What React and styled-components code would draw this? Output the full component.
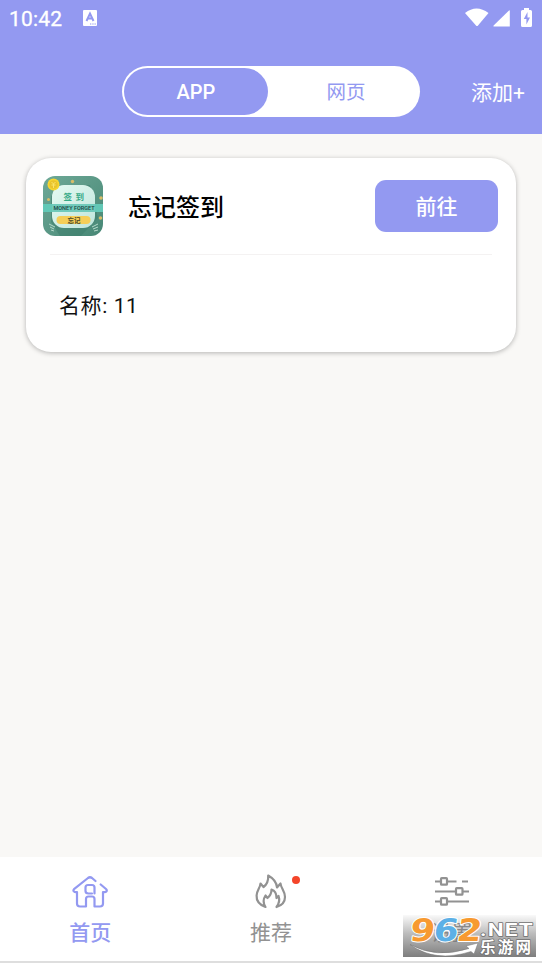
import React, { useState } from 'react';
import styled, { createGlobalStyle } from 'styled-components'

const purple = '#9399f1'

const GlobalStyle = createGlobalStyle`
    * {
        box-sizing: border-box;
    }

    body {
        margin: 0;
        background: #f9f8f6;
        font-family: Roboto, "Noto Sans CJK SC", sans-serif;
    }

    button {
        border: 0;
        padding: 0;
        background: none;
        font-family: inherit;
    }
`

const Screen = styled.div`
    position: relative;
    display: flex;
    flex-direction: column;
    width: 542px;
    height: 963px;
    overflow: hidden;
`

const Header = styled.header`
    flex: 0 0 134px;
    background: ${purple};
    color: #fff;
`

const StatusBar = styled.div`
    display: flex;
    align-items: center;
    height: 36px;
    padding: 0 8px 0 9px;
    font-size: 21px;
    line-height: 36px;

    time {
        width: 74px;
        padding-top: 2px;
        letter-spacing: 0.2px;
        -webkit-text-stroke: 0.3px #fff;
    }

    svg:last-child {
        margin-left: auto;
    }
`

const TopBar = styled.div`
    display: grid;
    grid-template-columns: 122px 298px 1fr;
    align-items: center;
    padding-top: 30px;
`

const Switcher = styled.div`
    grid-column: 2;
    display: flex;
    height: 51px;
    padding: 2px;
    border-radius: 26px;
    background: #fff;
`

const SwitchItem = styled.button`
    flex: 0 0 ${props => props.$width}px;
    height: 47px;
    padding-top: 2px;
    border-radius: 24px;
    background: ${props => props.$active ? purple : '#fff'};
    color: ${props => props.$active ? '#fff' : purple};
    font-size: ${props => props.$size}px;
    font-weight: ${props => props.$active ? 500 : 400};
    line-height: 45px;

    &:last-child {
        padding-left: 6px;
    }
`

const AddButton = styled.button`
    justify-self: end;
    padding: 2px 17px 0 0;
    color: #fff;
    font-size: 21px;
    line-height: 30px;
`

const Content = styled.main`
    flex: 1;
    padding: 24px 26px;
`

const Card = styled.section`
    height: 193.5px;
    border-radius: 25px;
    background: #fff;
    box-shadow: 0 1px 5px rgba(0, 0, 0, 0.28);
`

const CardHead = styled.div`
    display: flex;
    align-items: center;
    height: 97px;
    margin: 0 24px;
    border-bottom: 1px solid #f4f2f2;

    svg {
        flex: none;
        margin-left: -7px;
    }
`

const Title = styled.h1`
    flex: 1;
    margin: 4px 0 0 25px;
    color: #000;
    font-size: 24px;
    font-weight: 500;
    line-height: 34px;
`

const GoButton = styled.button`
    width: 123px;
    height: 52px;
    margin-right: -6px;
    padding-top: 2px;
    border-radius: 11px;
    background: ${purple};
    color: #fff;
    font-size: 21px;
    font-weight: 500;
    line-height: 50px;
`

const Detail = styled.p`
    margin: 0;
    padding: 34px 33px 0;
    color: #111;
    font-size: 21px;
    line-height: 34px;
    letter-spacing: 0.6px;
`

const TabBar = styled.nav`
    flex: 0 0 106px;
    display: grid;
    grid-template-columns: repeat(3, 1fr);
    border-bottom: 2px solid #dedede;
    background: #fff;
`

const TabItem = styled.button`
    display: flex;
    flex-direction: column;
    align-items: center;
    padding-top: 16px;
    color: ${props => props.$active ? purple : '#929292'};
    font-size: 21px;
    font-weight: ${props => props.$active ? 500 : 400};
    line-height: 30px;

    span {
        margin-top: 9px;
    }
`

const IconBox = styled.div`
    position: relative;
    width: 36px;
    height: 36px;

    svg {
        display: block;
    }
`

const Dot = styled.i`
    position: absolute;
    top: 3px;
    right: -11px;
    width: 8px;
    height: 8px;
    border-radius: 50%;
    background: #f4452a;
`

const Stamp = styled.svg`
    position: absolute;
    left: 403px;
    top: 915px;
    overflow: visible;
`

const InputIcon = () => (
    <svg width="14" height="16" viewBox="0 0 14 16">
        <rect width="14" height="16" rx="1" fill="#fff" />
        <path d="M3.5 11 7 3.5 10.5 11M5 8.5h4" fill="none" stroke={purple} strokeWidth="2" />
        <path d="M7 14h1.3M9.3 14h1.3M11.5 14h1.3" stroke={purple} />
    </svg>
)

const StatusIcons = () => (
    <svg width="69" height="22" viewBox="0 0 69 22" fill="#fff">
        <path d="M0 6Q11.5-3 23.5 6L13 18.5Q12 19.5 11 18.5Z" />
        <path d="M44 3.5Q44.800 2.800 44.800 4v15.500H29q-1.300 0-.4-.9Z" />
        <path d="M59 3V1h5v2h1.500q1.500 0 1.500 1.500v14q0 1.500-1.500 1.500h-8q-1.500 0-1.500-1.500v-14Q56 3 57.500 3Z" />
        <path d="M62.500 5 58.800 12h2.600v5.500l3.600-7h-2.500Z" fill={purple} />
    </svg>
)

const AppIcon = () => (
    <svg width="60" height="60" viewBox="0 0 60 60">
        <defs>
            <linearGradient id="iconBack" x2="1" y2="1">
                <stop stopColor="#6ea997" />
                <stop offset="1" stopColor="#478775" />
            </linearGradient>
            <linearGradient id="iconPlate" x2="1" y2="1">
                <stop stopColor="#e5faf2" />
                <stop offset="1" stopColor="#bfe5dc" />
            </linearGradient>
            <clipPath id="iconShape">
                <rect width="60" height="60" rx="12" />
            </clipPath>
        </defs>
        <g clipPath="url(#iconShape)">
            <rect width="60" height="60" fill="url(#iconBack)" />
            <path d="M8 20 22 9h25L55 42 38 60H17L8 46Z" fill="#397a68" opacity=".45" />
            <rect y="28" width="60" height="8" fill="#62c8b6" />
            <rect x="9" y="9" width="43" height="43" rx="12" fill="url(#iconPlate)" />
            <rect x="9" y="28" width="43" height="8" fill="#70cabb" />
            <text x="20.5" y="23.5" fontSize="8.5" fontWeight="700" fill="#35a986" letterSpacing="3.5">签到</text>
            <text x="10.5" y="34.3" textLength="41" lengthAdjust="spacingAndGlyphs" fontSize="6" fontWeight="500" fill="#17453f">MONEY FORGET</text>
            <rect x="13.5" y="40" width="34" height="8" rx="4" fill="#f5ce58" />
            <text x="24.5" y="46.5" fontSize="6.5" fontWeight="700" fill="#4b4928">忘记</text>
            <circle cx="10.5" cy="8.5" r="6" fill="#f6d62f" />
            <circle cx="10.5" cy="8.5" r="4.3" fill="#eac42c" />
            <path d="m8.500 6 2 2 2-2M10.500 8v4M8.500 9h4" fill="none" stroke="#f9e469" />
            <g fill="#d7bd68">
                <circle cx="29.5" cy="5.5" r="1.7" />
                <circle cx="5.5" cy="23.5" r="1.5" />
                <circle cx="58" cy="22" r="1.8" />
                <circle cx="57.5" cy="42" r="1.8" />
            </g>
            <path d="m6 48 6 3M7 51l4 2M8 54l3 1M55 48l-6 3M55 51l-5 2M55 54l-4 1" stroke="#b5d9cb" />
        </g>
    </svg>
)

const HomeIcon = () => (
    <svg width="36" height="36" viewBox="0 0 36 36" fill="none" stroke={purple} strokeWidth="2.2" strokeLinecap="round" strokeLinejoin="round">
        <path d="M23.5 8 20 5Q18 3.500 16 5L2 16.200Q.8 17.500 2 18.500q1 1 3 .5v11.500q0 3 3 3h6V26q0-2.500 2.500-2.500H20q2.500 0 2.500 2.500v7.500H28q3 0 3-3V19q2.500.5 3.300-.5 1-1.200-.3-2.500L28.700 11.500" />
        <path d="M20 20.500h-3.500q-3 0-3-2.500v-3.500q0-2.500 2.500-2.500h4q2.500 0 2.500 2.500V20.500" />
    </svg>
)

const FireIcon = () => (
    <svg width="36" height="36" viewBox="0 0 36 36" fill="none" stroke="#929292" strokeWidth="2.2" strokeLinejoin="round" strokeLinecap="round">
        <path d="M12.500 34C6 31.500 3.300 27 3.600 22.500 4 17 7 15.500 7.500 10.500L10.500 14C14.500 11 15.500 7.500 15.200 2.500 21.500 6 23.700 10 24 14.500L27.500 10.500C28 15.500 32 18 32 24 32 29 28.500 32.500 23.500 34 26.500 30 27 27 25.500 23L23.500 25C23.500 20.500 22 17.500 18.500 16.500 18.500 20 17.500 22.500 14.500 25L12.500 22.500C9.500 27 9.800 30 12.500 34Z" />
    </svg>
)

const SettingsIcon = () => (
    <svg width="36" height="36" viewBox="0 0 36 36" fill="none" stroke="#929292" strokeWidth="2.2">
        <path d="M1 8.500h6M13 8.500h9.500M28 8.500h6M1 18.500h20.500M28.500 18.500H35M1 28.500h6M13 28.500h22" />
        <rect x="7" y="5.2" width="6" height="6.5" rx=".8" />
        <rect x="22" y="15.2" width="6.5" height="6.5" rx=".8" />
        <rect x="7" y="25.2" width="6" height="6.5" rx=".8" />
    </svg>
)

const SiteStamp = () => (
    <Stamp width="133" height="42" viewBox="0 0 133 42">
        <defs>
            <linearGradient id="stampBack" x2="0" y2="1">
                <stop stopColor="#777" stopOpacity=".04" />
                <stop offset=".45" stopColor="#777" stopOpacity=".5" />
                <stop offset="1" stopColor="#777" stopOpacity=".95" />
            </linearGradient>
        </defs>
        <rect width="133" height="42" fill="url(#stampBack)" />
        <path d="M7 29.500Q33 44 66 33.500l-3-2.500 12-3-4 11-3-2.500Q32 48 7 29.500Z" fill="#fff" stroke="#777" strokeWidth=".5" />
        <g transform="translate(4.5 0) skewX(-8)" fontFamily="DejaVu Sans, sans-serif" fontWeight="700" fontSize="31" stroke="#fff" strokeWidth="2" paintOrder="stroke" strokeLinejoin="round">
            <text x="5" y="26" textLength="25" lengthAdjust="spacingAndGlyphs" fill="#f79a30">9</text>
            <text x="28.5" y="26" textLength="25" lengthAdjust="spacingAndGlyphs" fill="#5cb0e6">6</text>
            <text x="52" y="26" textLength="25" lengthAdjust="spacingAndGlyphs" fill="#f79a30">2</text>
        </g>
        <g fill="#fff" stroke="#707070" strokeWidth="1.5" paintOrder="stroke" strokeLinejoin="round">
            <text x="77" y="20.5" textLength="54" lengthAdjust="spacingAndGlyphs" fontFamily="Roboto, sans-serif" fontWeight="700" fontSize="19" letterSpacing="1">.NET</text>
            <text x="77" y="38" textLength="51" fontFamily="Noto Sans CJK SC, sans-serif" fontWeight="700" fontSize="15.5">乐游网</text>
        </g>
    </Stamp>
)

const tabs = [
    { name: '首页', Icon: HomeIcon },
    { name: '推荐', Icon: FireIcon, dot: true },
    { name: '设置', Icon: SettingsIcon },
]

const App = () => {
    const [mode, setMode] = useState('app')
    const [tab, setTab] = useState('首页')

    return (
        <>
            <GlobalStyle />
            <Screen>
                <Header>
                    <StatusBar>
                        <time>10:42</time>
                        <InputIcon />
                        <StatusIcons />
                    </StatusBar>
                    <TopBar>
                        <Switcher>
                            <SwitchItem $width={144} $size={20} $active={mode === 'app'} onClick={() => setMode('app')}>APP</SwitchItem>
                            <SwitchItem $width={150} $size={19.5} $active={mode === 'web'} onClick={() => setMode('web')}>网页</SwitchItem>
                        </Switcher>
                        <AddButton>添加+</AddButton>
                    </TopBar>
                </Header>
                <Content>
                    <Card>
                        <CardHead>
                            <AppIcon />
                            <Title>忘记签到</Title>
                            <GoButton>前往</GoButton>
                        </CardHead>
                        <Detail>名称: 11</Detail>
                    </Card>
                </Content>
                <TabBar>
                    {tabs.map(({ name, Icon, dot }) => (
                        <TabItem key={name} $active={tab === name} onClick={() => setTab(name)}>
                            <IconBox>
                                <Icon />
                                {dot && <Dot />}
                            </IconBox>
                            <span>{name}</span>
                        </TabItem>
                    ))}
                </TabBar>
                <SiteStamp />
            </Screen>
        </>
    )
}

export default App;
